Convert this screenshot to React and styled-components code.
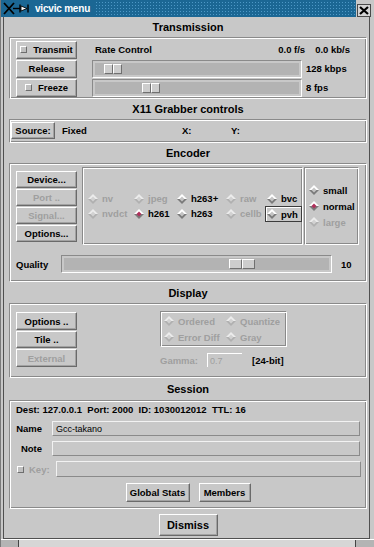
import React from "react";
import styled, { createGlobalStyle } from "styled-components";

const BG = "#c8c8c8";
const DIM = "#9f9f9f";
const FONT = `"Liberation Sans", Arial, sans-serif`;

const GlobalStyle = createGlobalStyle`
  html, body { margin: 0; padding: 0; background: ${BG}; }
  body { font-family: ${FONT}; }
`;

const Window = styled.div`
  box-sizing: border-box;
  width: 374px;
  height: 547px;
  display: flex;
  flex-direction: column;
  background: ${BG};
  border-left: 1px solid #7a7a7a;
  overflow: hidden;
  font: bold 9.5px ${FONT};
  color: #000;
`;

const TitleBar = styled.div`
  height: 17px;
  flex-shrink: 0;
  display: flex;
`;

const TitleMain = styled.div`
  flex: 1;
  display: flex;
  background-color: #1b6794;
  background-image: radial-gradient(circle, #4d98c6 0.75px, transparent 1px);
  background-size: 3px 3px;
  background-position: 1px 1px;
`;

const TitleLabel = styled.div`
  display: flex;
  align-items: center;
  gap: 5px;
  padding: 0 5px 0 1px;
  background: #1b6794;
  color: #fff;
  font: bold 10px ${FONT};
  letter-spacing: -0.2px;
`;

const CloseArea = styled.div`
  width: 18px;
  padding: 4px 0 0 1px;
  box-sizing: border-box;
`;

const CloseBox = styled.div`
  box-sizing: border-box;
  width: 14px;
  height: 13px;
  background: #d4d4d4;
  border: 1px solid #4a4a4a;
  display: flex;
  align-items: center;
  justify-content: center;
`;

const Main = styled.div`
  flex: 1;
  display: flex;
  flex-direction: column;
  margin: 0 4px 0 2px;
  padding: 0 2px 0 5px;
  border: 1px solid #505050;
  border-top: none;
`;

const SectionTitle = styled.div`
  height: ${(p) => p.$h}px;
  display: flex;
  align-items: center;
  justify-content: center;
  font: bold 11px ${FONT};
  flex-shrink: 0;
`;

const Panel = styled.div`
  box-sizing: border-box;
  height: ${(p) => p.$h}px;
  flex-shrink: 0;
  border: 1px solid;
  border-color: #8a8a8a #fff #fff #8a8a8a;
  box-shadow: inset 1px 1px 0 #fff, inset -1px -1px 0 #8a8a8a;
  padding: ${(p) => p.$pad};
  display: flex;
  flex-direction: column;
`;

const Row = styled.div`
  display: flex;
  align-items: center;
  height: ${(p) => p.$h || 19}px;
  margin-top: ${(p) => p.$mt || 0}px;
  gap: ${(p) => p.$gap || 0}px;
  justify-content: ${(p) => p.$justify || "flex-start"};
`;

const Btn = styled.button`
  box-sizing: border-box;
  width: ${(p) => p.$w}px;
  height: ${(p) => p.$h || 18}px;
  padding: 0;
  margin: 0;
  flex-shrink: 0;
  background: ${BG};
  border: 1px solid;
  border-color: #fff #6a6a6a #6a6a6a #fff;
  box-shadow: inset -1px -1px 0 #a2a2a2;
  font: bold ${(p) => p.$fs || 9.5}px ${FONT};
  color: ${(p) => (p.$off ? DIM : "#000")};
  display: flex;
  align-items: center;
  justify-content: center;
  gap: 6px;
`;

const Check = styled.span`
  box-sizing: border-box;
  width: 7px;
  height: 7px;
  background: #c0c0c0;
  border: 1px solid;
  border-color: #fff #6e6e6e #6e6e6e #fff;
  flex-shrink: 0;
`;

const ButtonColumn = styled.div`
  display: flex;
  flex-direction: column;
  gap: 1px;
  margin: ${(p) => p.$m};
  flex-shrink: 0;
`;

const Text = styled.span`
  display: inline-block;
  width: ${(p) => (p.$w ? `${p.$w}px` : "auto")};
  margin-left: ${(p) => p.$ml || 0}px;
  color: ${(p) => (p.$off ? DIM : "#000")};
  font-weight: ${(p) => (p.$normal ? "normal" : "bold")};
  text-align: ${(p) => p.$align || "left"};
  white-space: pre;
  flex-shrink: 0;
`;

const Spring = styled.div`
  flex: 1;
`;

const SliderFrame = styled.div`
  box-sizing: border-box;
  width: ${(p) => p.$w}px;
  height: 18px;
  margin-left: ${(p) => p.$ml || 0}px;
  border: 1px solid;
  border-color: #8a8a8a #fff #fff #8a8a8a;
  padding: 2px;
  flex-shrink: 0;
`;

const Track = styled.div`
  position: relative;
  height: 100%;
  background: #b3b3b3;
`;

const Thumb = styled.div`
  position: absolute;
  top: 1px;
  bottom: 1px;
  width: ${(p) => p.$w}px;
  display: flex;
`;

const ThumbHalf = styled.div`
  flex: 1;
  background: #cdcdcd;
  border: 1px solid;
  border-color: #fff #707070 #707070 #fff;
`;

function Slider({ w, ml, pos, thumb = 18 }) {
  return (
    <SliderFrame $w={w} $ml={ml}>
      <Track>
        <Thumb $w={thumb} style={{ left: pos }}>
          <ThumbHalf />
          <ThumbHalf />
        </Thumb>
      </Track>
    </SliderFrame>
  );
}

const Groove = styled.div`
  box-sizing: border-box;
  width: ${(p) => p.$w}px;
  height: ${(p) => p.$h}px;
  margin: ${(p) => p.$m || 0};
  border: 1px solid;
  border-color: #8a8a8a #fff #fff #8a8a8a;
  box-shadow: inset 1px 1px 0 #fff, inset -1px -1px 0 #8a8a8a;
  padding-left: ${(p) => p.$pl}px;
  display: grid;
  grid-template-columns: ${(p) => p.$cols};
  grid-auto-rows: ${(p) => p.$row}px;
  align-content: center;
  flex-shrink: 0;
`;

const Radio = styled.div`
  display: flex;
  align-items: center;
  gap: 4px;
  color: ${(p) => (p.$off ? DIM : "#000")};
  white-space: nowrap;
`;

const Focus = styled.div`
  display: flex;
  align-items: center;
  gap: 4px;
  margin-left: -2px;
  padding: 0 3px 0 1px;
  height: 14px;
  border: 1px solid #3c3c3c;
  box-shadow: inset 1px 1px 0 #fff;
  width: fit-content;
`;

function Diamond({ on, off }) {
  const hi = off ? "#ececec" : "#ffffff";
  const lo = off ? "#b0b0b0" : "#7a7a7a";
  const mid = on ? "#b0305c" : off ? "#d2d2d2" : "#c4c4c4";
  return (
    <svg width="10" height="10" viewBox="0 0 10 10">
      <polygon points="5,0 10,5 0,5" fill={hi} />
      <polygon points="0,5 10,5 5,10" fill={lo} />
      <polygon points="5,2.5 7.5,5 5,7.5 2.5,5" fill={mid} />
    </svg>
  );
}

function Option({ label, on, off }) {
  return (
    <Radio $off={off}>
      <Diamond on={on} off={off} />
      {label}
    </Radio>
  );
}

const Entry = styled.div`
  box-sizing: border-box;
  width: ${(p) => p.$w}px;
  height: ${(p) => p.$h || 15}px;
  margin-left: ${(p) => p.$ml || 0}px;
  border: 1px solid;
  border-color: #f2f2f2 #8a8a8a #8a8a8a #f2f2f2;
  padding-left: 3px;
  display: flex;
  align-items: center;
  font: normal 9px ${FONT};
  flex-shrink: 0;
`;

const GammaEntry = styled.div`
  box-sizing: border-box;
  width: 35px;
  height: 14px;
  margin-left: 9px;
  border-top: 1px solid #fff;
  border-left: 1px solid #fff;
  padding-left: 2px;
  font: normal 9px ${FONT};
  color: ${DIM};
  display: flex;
  align-items: center;
`;

const FieldLabel = styled.span`
  width: 26px;
  text-align: right;
  margin-right: 10px;
  flex-shrink: 0;
`;

const BottomBar = styled.div`
  height: 7px;
  flex-shrink: 0;
  display: flex;
  border-top: 1px solid #fff;
  margin-left: -1px;
`;

const Corner = styled.div`
  width: ${(p) => p.$w}px;
  background: #b4b4b4;
  border-right: ${(p) => (p.$left ? "1px solid #444" : "none")};
  border-left: ${(p) => (p.$left ? "none" : "1px solid #444")};
`;

const Edge = styled.div`
  flex: 1;
  background: #d6d6d6;
`;

export default function App() {
  return (
    <>
      <GlobalStyle />
      <Window>
        <TitleBar>
          <TitleMain>
            <TitleLabel>
              <svg width="28" height="15" viewBox="0 0 28 15">
                <path d="M2 2 L12 13 M12 2 L2 13" stroke="#000" strokeWidth="1.8" />
                <path d="M11 7.5 H18" stroke="#000" strokeWidth="1.4" />
                <path d="M18 3.5 V11.5 M26 3.5 V11.5" stroke="#000" strokeWidth="1.4" />
                <path d="M19 5 L25 7.5 L19 10 Z" fill="#fff" stroke="#000" strokeWidth="0.9" />
              </svg>
              <span>vicvic menu</span>
            </TitleLabel>
          </TitleMain>
          <CloseArea>
            <CloseBox>
              <svg width="10" height="9" viewBox="0 0 10 9">
                <path d="M1 1 L9 8 M9 1 L1 8" stroke="#000" strokeWidth="2.2" />
              </svg>
            </CloseBox>
          </CloseArea>
        </TitleBar>

        <Main>
          <SectionTitle $h={20}>Transmission</SectionTitle>
          <Panel $h={62} $pad="2px 0 0 6px">
            <Row $h={19}>
              <Btn $w={61}>
                <Check />
                Transmit
              </Btn>
              <Text $ml={18}>Rate Control</Text>
              <Spring />
              <Text>0.0 f/s</Text>
              <Text $ml={10}>0.0 kb/s</Text>
              <Text $w={16} />
            </Row>
            <Row $h={19}>
              <Btn $w={61}>Release</Btn>
              <Slider w={210} ml={15} pos={9} />
              <Text $ml={4}>128 kbps</Text>
            </Row>
            <Row $h={19}>
              <Btn $w={61}>
                <Check />
                Freeze
              </Btn>
              <Slider w={210} ml={15} pos={47} />
              <Text $ml={4}>8 fps</Text>
            </Row>
          </Panel>

          <SectionTitle $h={20}>X11 Grabber controls</SectionTitle>
          <Panel $h={24} $pad="1px 0 0 1px">
            <Row $h={18}>
              <Btn $w={44} $h={17}>Source:</Btn>
              <Text $ml={7} $w={120}>Fixed</Text>
              <Text $w={49}>X:</Text>
              <Text>Y:</Text>
            </Row>
          </Panel>

          <SectionTitle $h={20}>Encoder</SectionTitle>
          <Panel $h={119} $pad="0 0 0 6px">
            <Row $h={81} style={{ alignItems: "flex-start" }}>
              <ButtonColumn $m="7px 0 0 0">
                <Btn $w={61} $h={17}>Device...</Btn>
                <Btn $w={61} $h={17} $off>Port ..</Btn>
                <Btn $w={61} $h={17} $off>Signal...</Btn>
                <Btn $w={61} $h={17}>Options...</Btn>
              </ButtonColumn>
              <Groove
                $w={221}
                $h={78}
                $m="3px 0 0 5px"
                $pl={5}
                $cols="46px 43px 49px 41px auto"
                $row={15}
              >
                <Option label="nv" off />
                <Option label="jpeg" off />
                <Option label="h263+" />
                <Option label="raw" off />
                <Option label="bvc" />
                <Option label="nvdct" off />
                <Option label="h261" on />
                <Option label="h263" />
                <Option label="cellb" off />
                <Focus>
                  <Diamond />
                  pvh
                </Focus>
              </Groove>
              <Groove $w={55} $h={78} $m="3px 0 0 1px" $pl={4} $cols="auto" $row={16}>
                <Option label="small" />
                <Option label="normal" on />
                <Option label="large" off />
              </Groove>
            </Row>
            <Row $h={18} $mt={10}>
              <Text $w={45}>Quality</Text>
              <Slider w={271} pos={165} thumb={26} />
              <Text $ml={9}>10</Text>
            </Row>
          </Panel>

          <SectionTitle $h={21}>Display</SectionTitle>
          <Panel $h={75} $pad="0 0 0 6px">
            <Row $h={70} style={{ alignItems: "flex-start" }}>
              <ButtonColumn $m="8px 0 0 0">
                <Btn $w={61} $h={18}>Options ..</Btn>
                <Btn $w={61} $h={17}>Tile ..</Btn>
                <Btn $w={61} $h={18} $off>External</Btn>
              </ButtonColumn>
              <div style={{ marginLeft: 83, marginTop: 7 }}>
                <Groove $w={127} $h={36} $pl={3} $cols="62px auto" $row={16}>
                  <Option label="Ordered" off />
                  <Option label="Quantize" off />
                  <Option label="Error Diff" off />
                  <Option label="Gray" off />
                </Groove>
                <Row $h={14} $mt={6}>
                  <Text $off>Gamma:</Text>
                  <GammaEntry>0.7</GammaEntry>
                  <Text $ml={10}>[24-bit]</Text>
                </Row>
              </div>
            </Row>
          </Panel>

          <SectionTitle $h={22}>Session</SectionTitle>
          <Panel $h={109} $pad="1px 0 0 6px">
            <Row $h={14}>
              <Text>Dest: 127.0.0.1  Port: 2000  ID: 1030012012  TTL: 16</Text>
            </Row>
            <Row $h={15} $mt={5}>
              <FieldLabel>Name</FieldLabel>
              <Entry $w={308}>Gcc-takano</Entry>
            </Row>
            <Row $h={15} $mt={5}>
              <FieldLabel>Note</FieldLabel>
              <Entry $w={308} />
            </Row>
            <Row $h={16} $mt={5}>
              <Check style={{ marginLeft: 1 }} />
              <Text $ml={5} $off>Key:</Text>
              <Entry $w={305} $h={16} $ml={6} />
            </Row>
            <Row $h={19} $mt={6} $gap={9} $justify="center" style={{ marginLeft: -6 }}>
              <Btn $w={64} $h={19}>Global Stats</Btn>
              <Btn $w={52} $h={19}>Members</Btn>
            </Row>
          </Panel>

          <Row $h={22} $mt={5} $justify="center">
            <Btn $w={59} $h={22} $fs={11}>Dismiss</Btn>
          </Row>
        </Main>

        <BottomBar>
          <Corner $w={18} $left />
          <Edge />
          <Corner $w={18} />
        </BottomBar>
      </Window>
    </>
  );
}
